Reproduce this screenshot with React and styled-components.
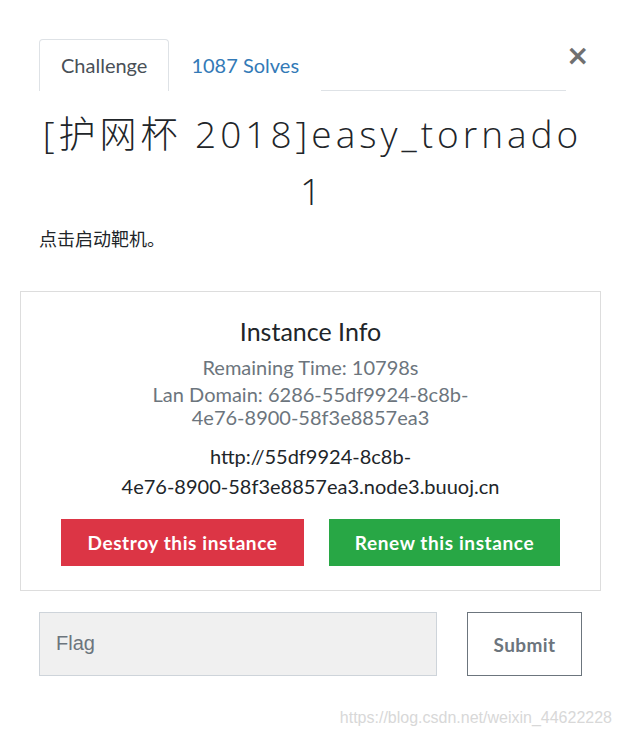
import React from "react";
import styled, { createGlobalStyle } from "styled-components";

const GlobalStyle = createGlobalStyle`
  body {
    margin: 0;
    background: #fff;
    font-family: Lato, "Noto Sans CJK SC", sans-serif;
    color: #212529;
  }
`;

const Page = styled.div`
  position: relative;
  width: 621px;
  height: 735px;
  box-sizing: border-box;
  padding: 39px 20px 0 20px;
  overflow: hidden;
`;

const Header = styled.div`
  display: flex;
  align-items: flex-start;
  padding: 0 19px;
`;

const Tabs = styled.div`
  display: flex;
  flex-shrink: 0;
  width: 527px;
  border-bottom: 1px solid #dee2e6;
`;

const Tab = styled.div`
  height: 52px;
  box-sizing: border-box;
  padding: 0 21px 2px;
  display: flex;
  align-items: center;
  font-size: 20px;
  color: ${(p) => (p.$active ? "#495057" : "#337ab7")};
  border: 1px solid ${(p) => (p.$active ? "#dee2e6" : "transparent")};
  border-bottom: none;
  border-radius: 4px 4px 0 0;
  background: #fff;
  margin-bottom: -1px;
`;

const Close = styled.div`
  margin-left: auto;
  margin-top: 3px;
  margin-right: 1px;
  font-size: 28px;
  line-height: 1;
  color: #707070;
  font-family: "DejaVu Sans", sans-serif;
  font-weight: bold;
`;

const Title = styled.h1`
  margin: 14px 0 0;
  text-align: center;
  font-family: "Open Sans", "Noto Sans CJK SC", sans-serif;
  font-weight: 300;
  font-size: 37px;
  line-height: 57px;
  letter-spacing: 4px;
  padding: 0 0 0 4px;
`;

const Desc = styled.p`
  margin: 6px 19px 0;
  font-size: 18px;
  font-family: "Noto Sans CJK SC", sans-serif;
`;

const InfoBox = styled.div`
  margin-top: 40px;
  border: 1px solid #dddddd;
  height: 300px;
  box-sizing: border-box;
  padding: 23px 40px 0;
  text-align: center;
`;

const InfoTitle = styled.h4`
  margin: 0;
  font-size: 25px;
  font-weight: 400;
  line-height: 32px;
`;

const Muted = styled.div`
  color: #6c757d;
  font-size: 20px;
  line-height: 23px;
  margin-top: ${(p) => p.$mt || 0}px;
`;

const Link = styled.div`
  margin-top: 12px;
  font-size: 20px;
  line-height: 30px;
  color: #212529;
`;

const Buttons = styled.div`
  display: flex;
  justify-content: space-between;
  margin-top: 18px;
`;

const ActionButton = styled.button`
  border: none;
  height: 47px;
  width: ${(p) => p.$w}px;
  background: ${(p) => p.$bg};
  color: #fff;
  font-family: Lato, sans-serif;
  font-weight: 700;
  font-size: 19px;
  letter-spacing: 0.6px;
`;

const FlagRow = styled.div`
  display: flex;
  justify-content: space-between;
  margin-top: 21px;
  padding: 0 19px;
`;

const FlagInput = styled.input`
  width: 398px;
  height: 64px;
  box-sizing: border-box;
  background: #f0f0f0;
  border: 1px solid #ced4da;
  padding: 0 16px 2px;
  font-family: "Liberation Sans", Arial, sans-serif;
  font-size: 20px;
  &::placeholder {
    color: #6c757d;
  }
`;

const SubmitButton = styled.button`
  width: 115px;
  height: 64px;
  background: #fff;
  border: 1px solid #6c757d;
  color: #6c757d;
  font-family: Lato, sans-serif;
  font-weight: 700;
  font-size: 19px;
  letter-spacing: 0.4px;
`;

const Watermark = styled.div`
  position: absolute;
  right: 9px;
  bottom: 8px;
  font-family: "Liberation Sans", Arial, sans-serif;
  font-size: 16px;
  color: #d8d8d8;
`;

export default function App() {
  return (
    <>
      <GlobalStyle />
      <Page>
        <Header>
          <Tabs>
            <Tab $active>Challenge</Tab>
            <Tab>1087 Solves</Tab>
          </Tabs>
          <Close>×</Close>
        </Header>
        <Title>
          [护网杯 2018]easy_tornado
          <br />1
        </Title>
        <Desc>点击启动靶机。</Desc>
        <InfoBox>
          <InfoTitle>Instance Info</InfoTitle>
          <Muted $mt={9}>Remaining Time: 10798s</Muted>
          <Muted $mt={4}>
            Lan Domain: 6286-55df9924-8c8b-
            <br />
            4e76-8900-58f3e8857ea3
          </Muted>
          <Link>
            http://55df9924-8c8b-
            <br />
            4e76-8900-58f3e8857ea3.node3.buuoj.cn
          </Link>
          <Buttons>
            <ActionButton $w={243} $bg="#dc3545">Destroy this instance</ActionButton>
            <ActionButton $w={231} $bg="#28a745">Renew this instance</ActionButton>
          </Buttons>
        </InfoBox>
        <FlagRow>
          <FlagInput placeholder="Flag" />
          <SubmitButton>Submit</SubmitButton>
        </FlagRow>
        <Watermark>https://blog.csdn.net/weixin_44622228</Watermark>
      </Page>
    </>
  );
}
